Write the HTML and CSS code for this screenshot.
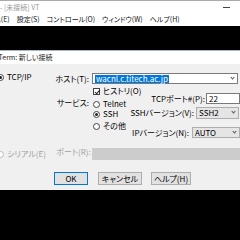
FILE: index.html
```html
<!DOCTYPE html>
<html lang="ja">
<head>
<meta charset="utf-8">
<link rel="stylesheet" href="styles.css">
</head>
<body>
<div class="app">
  <div class="titlebar">
    <span class="title">Tera Term - [未接続] VT</span>
    <span class="minbtn"></span>
  </div>
  <div class="menubar">
    <span class="first">ファイル(F)</span><span>編集(E)</span><span>設定(S)</span><span>コントロール(O)</span><span>ウィンドウ(W)</span><span>ヘルプ(H)</span>
  </div>
  <div class="terminal"></div>
</div>

<div class="dialog">
  <div class="dtitle">Tera Term: 新しい接続</div>
  <div class="dbody">
    <div class="top">
      <div class="c1">
        <div class="opt h11"><span class="radio on"></span>TCP/IP</div>
      </div>
      <div class="c2">
        <div class="lbl h11">ホスト(T):</div>
        <div class="lbl svc">サービス:</div>
      </div>
      <div class="c3">
        <div class="combo host"><span class="sel">wacnl.c.titech.ac.jp</span><span class="arrow"></span></div>
        <div class="split">
          <div class="opts">
            <div class="opt hist"><span class="check"></span>ヒストリ(O)</div>
            <div class="opt telnet"><span class="radio"></span>Telnet</div>
            <div class="opt ssh"><span class="radio on"></span>SSH</div>
            <div class="opt other"><span class="radio"></span>その他</div>
          </div>
          <div class="conf">
            <div class="crow port"><span class="clbl">TCPポート#(P):</span><span class="field w-port">22</span></div>
            <div class="crow sshv"><span class="clbl">SSHバージョン(V):</span><span class="combo w-ssh">SSH2<span class="arrow"></span></span></div>
            <div class="crow ipv"><span class="clbl">IPバージョン(N):</span><span class="combo w-ip">AUTO<span class="arrow"></span></span></div>
          </div>
        </div>
      </div>
    </div>
    <div class="serial">
      <div class="c1"><div class="opt dis"><span class="radio dim"></span>シリアル(E)</div></div>
      <div class="c2"><div class="lbl dis">ポート(R):</div></div>
      <div class="combo disabled wide"><span class="arrow"></span></div>
    </div>
    <div class="buttons">
      <span class="btn ok">OK</span>
      <span class="btn cancel">キャンセル</span>
      <span class="btn help">ヘルプ(H)</span>
    </div>
  </div>
</div>
</body>
</html>
```

FILE: styles.css
```css
* { box-sizing: border-box; margin: 0; padding: 0; }
html, body { width: 240px; height: 240px; overflow: hidden; }
body {
  background: #000;
  position: relative;
  font-family: "Noto Sans CJK JP", "Noto Sans", sans-serif;
  font-feature-settings: "palt";
  color: #000;
  line-height: 1;
}

.app { width: 320px; margin-left: -40px; }
.titlebar {
  height: 13px;
  background: #fff;
  border-top: 1px solid #aaa;
  display: flex;
  align-items: center;
  font-size: 7px;
  color: #999;
}
.title { padding-left: 6px; }
.minbtn { width: 7px; height: 1px; background: #444; margin-left: auto; margin-right: 50px; }
.menubar {
  height: 13px;
  background: #fff;
  display: flex;
  align-items: center;
  gap: 7px;
  font-size: 7px;
  color: #111;
}
.menubar .first { margin-left: -13px; }
.terminal { height: 214px; background: #000; }

.dialog {
  position: absolute;
  left: -24px;
  top: 50px;
  width: 290px;
  height: 140px;
  background: #f0f0f0;
  border-top: 1px solid #a8b8c8;
  display: flex;
  flex-direction: column;
  font-size: 8px;
}
.dtitle {
  height: 13px;
  background: #fff;
  display: flex;
  align-items: center;
  padding-left: 7px;
  font-size: 7px;
  color: #222;
}
.dbody { padding: 9px 0 0 21px; display: flex; flex-direction: column; }

.top { display: flex; }
.c1 { width: 61px; flex: none; }
.c2 { width: 34px; flex: none; display: flex; flex-direction: column; }
.c3 { width: 148px; flex: none; display: flex; flex-direction: column; }
.h11 { height: 11px; }
.lbl { display: flex; align-items: center; justify-content: flex-end; padding-right: 3px; white-space: nowrap; }
.svc { height: 10px; margin-top: 14px; }

.opt { display: flex; align-items: center; gap: 3px; white-space: nowrap; height: 8px; }
.radio {
  width: 7px; height: 7px; border-radius: 50%;
  border: 1px solid #444; background: #fff; flex: none;
  display: flex; align-items: center; justify-content: center;
}
.radio.on::after { content: ""; width: 3px; height: 3px; border-radius: 50%; background: #222; }
.radio.dim { border-color: #bbb; }
.check {
  width: 7px; height: 7px; border: 1px solid #444; background: #fff; flex: none; position: relative;
}
.check::after {
  content: ""; position: absolute; left: 1.5px; top: 0; width: 2px; height: 3.5px;
  border-right: 1px solid #222; border-bottom: 1px solid #222; transform: rotate(40deg);
}

.combo, .field {
  height: 11px; background: #fff; border: 1px solid #7a7a7a;
  display: flex; align-items: center; padding-left: 2px; position: relative;
}
.combo .arrow {
  position: absolute; right: 3px; top: 2px; width: 3px; height: 3px;
  border-right: 1px solid #555; border-bottom: 1px solid #555; transform: rotate(45deg);
}
.host { width: 146px; }
.sel { background: #0078d7; color: #fff; padding: 0 1px; height: 8px; display: flex; align-items: center; }

.split { display: flex; }
.opts { width: 58px; flex: none; padding-left: 1px; display: flex; flex-direction: column; }
.hist { margin-top: 3px; }
.telnet { margin-top: 5px; }
.ssh { margin-top: 2px; }
.other { margin-top: 4px; }

.conf { width: 90px; display: flex; flex-direction: column; align-items: flex-end; }
.crow { display: flex; align-items: center; white-space: nowrap; }
.port { margin-top: 9px; }
.sshv { margin-top: 3px; }
.ipv { margin-top: 8px; }
.w-port { width: 34px; margin-left: 1px; height: 11px; }
.w-ssh { width: 43px; margin-left: 2px; margin-right: 1px; height: 12px; background: #e5e5e5; border-color: #adadad; }
.w-ip { width: 48px; margin-left: 3px; height: 11px; background: #e5e5e5; border-color: #adadad; }

.serial { display: flex; margin-top: 10px; height: 12px; align-items: center; }
.serial .c1, .serial .c2 { height: 12px; display: flex; align-items: center; }
.dis { color: #a0a0a0; }
.combo.disabled { background: #ccc; border-color: #ccc; height: 12px; }
.combo.disabled .arrow { border-color: #aaa; }
.wide { width: 160px; }

.buttons { display: flex; margin-top: 12px; padding-left: 57px; }
.btn {
  height: 13px; background: #e1e1e1; border: 1px solid #adadad;
  display: flex; align-items: center; justify-content: center;
}
.ok { width: 34px; border-color: #0078d7; }
.cancel { width: 44px; margin-left: 10px; }
.help { width: 40px; margin-left: 9px; }
```
